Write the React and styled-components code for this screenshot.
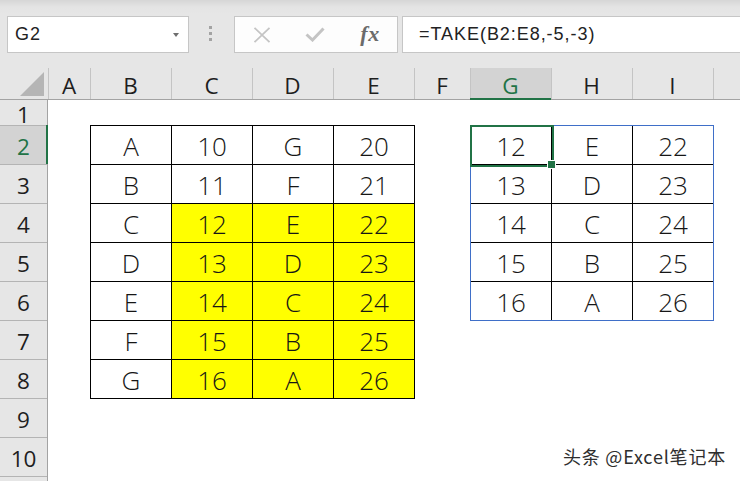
import React from "react";
import styled, { createGlobalStyle } from "styled-components";

const Global = createGlobalStyle`
  html, body { margin: 0; padding: 0; background: #fff; }
  body { width: 740px; height: 481px; overflow: hidden; font-family: "Open Sans", "Liberation Sans", sans-serif; }
  #root { width: 740px; height: 481px; overflow: hidden; position: relative; }
`;

const Page = styled.div`
  width: 740px;
  height: 481px;
  display: flex;
  flex-direction: column;
  overflow: hidden;
  position: relative;
`;

const Toolbar = styled.div`
  height: 68px;
  flex: none;
  box-sizing: border-box;
  padding: 16px 0 0 7px;
  display: flex;
  align-items: flex-start;
  background: linear-gradient(#d6d6d6 0px, #e4e4e4 7px, #e6e6e6 14px);
`;

const NameBox = styled.div`
  width: 182px;
  height: 37px;
  box-sizing: border-box;
  border: 1px solid #c6c6c6;
  background: #fff;
  display: flex;
  align-items: center;
  padding: 0 8px 0 7px;
  font-family: "Liberation Sans", Arial, sans-serif;
  font-size: 18px;
  letter-spacing: 0.9px;
  color: #222;
`;

const NameText = styled.span`
  flex: 1;
`;

const Caret = styled.span`
  width: 0;
  height: 0;
  border-left: 3.5px solid transparent;
  border-right: 3.5px solid transparent;
  border-top: 4px solid #6e6e6e;
  margin-right: 1px;
`;

const Grip = styled.div`
  margin: 10px 0 0 20px;
  display: flex;
  flex-direction: column;
  gap: 3px;
`;

const GripDot = styled.span`
  width: 3px;
  height: 3px;
  background: #a3a3a3;
`;

const FxButtons = styled.div`
  margin-left: 22px;
  width: 164px;
  height: 37px;
  box-sizing: border-box;
  border: 1px solid #c6c6c6;
  background: #fdfdfd;
  display: flex;
  align-items: center;
  padding-left: 18px;
  gap: 34px;
`;

const IconSlot = styled.span`
  width: ${(p) => p.$w || 20}px;
  display: flex;
  align-items: center;
  justify-content: center;
`;

const FxLabel = styled.span`
  font-family: "Liberation Serif", "Times New Roman", serif;
  font-style: italic;
  font-weight: 700;
  font-size: 22px;
  color: #6b6b6b;
  letter-spacing: 0.5px;
  line-height: 1;
  margin-top: -2px;
`;

const FormulaInput = styled.div`
  margin-left: 4px;
  flex: 1;
  height: 37px;
  box-sizing: border-box;
  border: 1px solid #c6c6c6;
  border-right: none;
  background: #fff;
  display: flex;
  align-items: center;
  padding-left: 16px;
  font-family: "Liberation Sans", Arial, sans-serif;
  font-size: 18px;
  letter-spacing: 0.95px;
  color: #222;
`;

const Sheet = styled.div`
  flex: 1;
  display: grid;
  grid-template-columns: 48px 42px repeat(4, 81px) 56px repeat(3, 81px) 1fr;
  grid-template-rows: 32px 25px repeat(10, 39px);
  background: #fff;
`;

const Corner = styled.div`
  grid-column: 1;
  grid-row: 1;
  background: #e6e6e6;
  border-bottom: 1px solid #a3a3a3;
  box-sizing: border-box;
  position: relative;
`;

const CornerTriangle = styled.span`
  position: absolute;
  left: 20px;
  top: 4px;
  width: 0;
  height: 0;
  border-left: 24px solid transparent;
  border-bottom: 24px solid #b5b5b5;
`;

const ColHeader = styled.div`
  grid-row: 1;
  box-sizing: border-box;
  background: ${(p) => (p.$active ? "#d3d3d3" : "#e6e6e6")};
  border-bottom: ${(p) => (p.$active ? "2px solid #217346" : "1px solid #a3a3a3")};
  box-shadow: inset 1px 0 #c4c4c4;
  display: flex;
  align-items: center;
  justify-content: center;
  padding-top: 4px;
  font-family: "Open Sans", "Liberation Sans", sans-serif;
  font-size: 22.5px;
  color: ${(p) => (p.$active ? "#217346" : "#1e1e1e")};
`;

const RowHeader = styled.div`
  grid-column: 1;
  box-sizing: border-box;
  background: ${(p) => (p.$active ? "#d3d3d3" : "#e6e6e6")};
  border-right: ${(p) => (p.$active ? "2px solid #217346" : "1px solid #a3a3a3")};
  box-shadow: ${(p) => (p.$first ? "none" : "inset 0 1px #b4b4b4")};
  display: flex;
  align-items: center;
  justify-content: center;
  padding-top: 4px;
  padding-left: ${(p) => (p.$active ? "1px" : "0")};
  font-family: "Open Sans", "Liberation Sans", sans-serif;
  font-size: 22.5px;
  color: ${(p) => (p.$active ? "#217346" : "#1e1e1e")};
`;

const DataTable = styled.div`
  grid-column: ${(p) => p.$cols};
  grid-row: ${(p) => p.$rows};
  align-self: start;
  justify-self: start;
  position: relative;
  display: grid;
  grid-template-columns: repeat(${(p) => p.$n}, 80px);
  grid-auto-rows: 38px;
  gap: 1px;
  background: #000;
  box-sizing: border-box;
  ${(p) => (p.$spill ? "border: 1px solid #3f6fc8;" : "padding: 1px;")}
`;

const Cell = styled.div`
  background: ${(p) => (p.$hl ? "#ffff00" : "#fff")};
  display: flex;
  align-items: center;
  justify-content: center;
  padding-top: 1px;
  font-family: "Open Sans", "Liberation Sans", sans-serif;
  font-weight: 300;
  font-size: 26px;
  color: #161616;
`;

const Selection = styled.div`
  position: absolute;
  left: -1px;
  top: -1px;
  width: 84px;
  height: 42px;
  box-sizing: border-box;
  border: 2px solid #217346;
  pointer-events: none;
`;

const FillHandle = styled.span`
  position: absolute;
  left: 77px;
  top: 35px;
  width: 7px;
  height: 7px;
  background: #217346;
  box-shadow: 0 0 0 1px #fff;
`;

const Watermark = styled.div`
  position: absolute;
  right: 14px;
  bottom: 12px;
  font-family: "Noto Sans CJK SC", "Liberation Sans", sans-serif;
  font-size: 18px;
  color: #2e2e2e;
  text-shadow: 0 0 2px #fff, 0 0 2px #fff, 0 0 3px #fff;
  letter-spacing: 0.8px;
`;

const columns = ["A", "B", "C", "D", "E", "F", "G", "H", "I"];

const leftData = [
  ["A", "10", "G", "20"],
  ["B", "11", "F", "21"],
  ["C", "12", "E", "22"],
  ["D", "13", "D", "23"],
  ["E", "14", "C", "24"],
  ["F", "15", "B", "25"],
  ["G", "16", "A", "26"],
];

const rightData = [
  ["12", "E", "22"],
  ["13", "D", "23"],
  ["14", "C", "24"],
  ["15", "B", "25"],
  ["16", "A", "26"],
];

const XIcon = () => (
  <svg width="18" height="16" viewBox="0 0 18 16">
    <path d="M1.5 0.8 L16.5 15.2 M16.5 0.8 L1.5 15.2" stroke="#c4c4c4" strokeWidth="1.8" fill="none" />
  </svg>
);

const CheckIcon = () => (
  <svg width="20" height="15" viewBox="0 0 20 15">
    <path d="M1.5 7.5 L7.5 13 L18.5 1.5" stroke="#c4c4c4" strokeWidth="3" fill="none" strokeLinejoin="miter" />
  </svg>
);

export default function App() {
  return (
    <Page>
      <Global />
      <Toolbar>
        <NameBox>
          <NameText>G2</NameText>
          <Caret />
        </NameBox>
        <Grip>
          <GripDot />
          <GripDot />
          <GripDot />
        </Grip>
        <FxButtons>
          <IconSlot $w={18}>
            <XIcon />
          </IconSlot>
          <IconSlot $w={20}>
            <CheckIcon />
          </IconSlot>
          <IconSlot $w={22}>
            <FxLabel>fx</FxLabel>
          </IconSlot>
        </FxButtons>
        <FormulaInput>=TAKE(B2:E8,-5,-3)</FormulaInput>
      </Toolbar>
      <Sheet>
        <Corner>
          <CornerTriangle />
        </Corner>
        {columns.map((c) => (
          <ColHeader key={c} $active={c === "G"}>
            {c}
          </ColHeader>
        ))}
        <ColHeader />
        {Array.from({ length: 11 }, (_, i) => (
          <RowHeader key={i} style={{ gridRow: i + 2 }} $first={i === 0} $active={i === 1}>
            {i < 10 ? i + 1 : ""}
          </RowHeader>
        ))}
        <DataTable $cols="3 / 7" $rows="3 / 10" $n={4} style={{ width: 325, height: 274 }}>
          {leftData.map((row, r) =>
            row.map((v, c) => (
              <Cell key={`${r}-${c}`} $hl={r >= 2 && c >= 1}>
                {v}
              </Cell>
            ))
          )}
        </DataTable>
        <DataTable $cols="8 / 11" $rows="3 / 8" $n={3} $spill style={{ width: 244, height: 196 }}>
          {rightData.map((row, r) =>
            row.map((v, c) => <Cell key={`${r}-${c}`}>{v}</Cell>)
          )}
          <Selection />
          <FillHandle />
        </DataTable>
      </Sheet>
      <Watermark>头条 @Excel笔记本</Watermark>
    </Page>
  );
}
